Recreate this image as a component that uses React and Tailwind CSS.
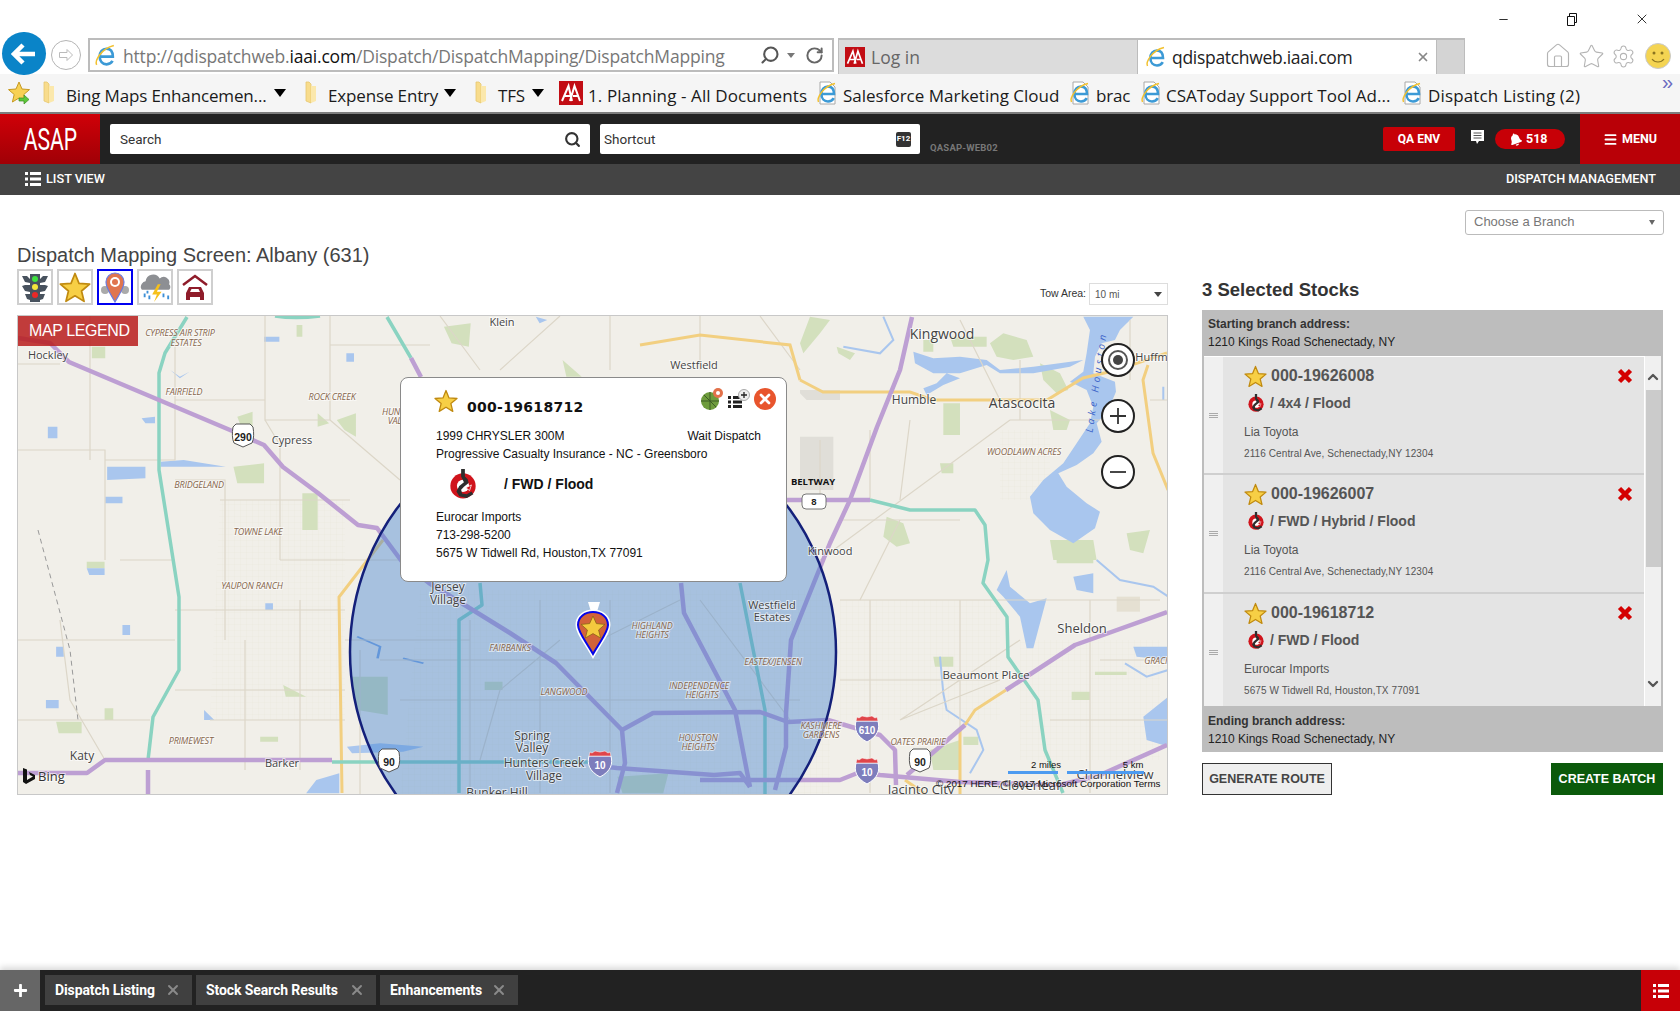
import { Search, RotateCw, Home, Star as StarLine, Settings, X, Minus, Menu, ChevronUp, ChevronDown } from "lucide-react";
import { FaBell, FaPlus } from "react-icons/fa";

const segoe = "font-['Open_Sans',sans-serif]";

const StarIcon = ({ size = 22, className = "" }) => (
  <svg width={size} height={size} viewBox="0 0 24 24" className={className} aria-hidden="true">
    <path d="M12 1.500l3 7.400 8 .6-6.100 5.100 1.900 7.800L12 18.200l-6.800 4.200 1.900-7.800L1 9.500l8-.6z" fill="#f7cf45" stroke="#c08a10" strokeWidth="1.300" strokeLinejoin="round" />
  </svg>
);

const HookIcon = ({ size = 16 }) => (
  <svg width={size} height={size + 2} viewBox="0 0 28 32" className="shrink-0" aria-hidden="true">
    <circle cx="14" cy="18" r="13.500" fill="#d0141c" />
    <circle cx="14" cy="18" r="6.500" fill="#fff" />
    <path d="M12 0h4v8l3 3 1 4-5 4-3 3 1 4 5 1 5-3 2 3-7 4-8-2-3-5 3-6 5-4-2-4-1-2z" fill="#2e2e2e" />
    <path d="M17 20l6-3-2 6z" fill="#d0141c" stroke="#fff" strokeWidth="0.800" />
  </svg>
);

const IeIcon = ({ size = 22, page = false }) => (
  <svg width={size} height={size} viewBox="0 0 24 24" className="shrink-0" aria-hidden="true">
    {page && <path d="M5 1h10l5 5v17H5z" fill="#fff" stroke="#a8a8a8" />}
    <path d="M7 13h12c0-5-2.600-7.500-6.200-7.500S6.400 8.500 6.400 13s2.800 7.500 6.600 7.500c2.600 0 4.600-1.200 5.800-3.300" fill="none" stroke="#3c9ad6" strokeWidth="2.600" />
    <path d="M3.500 21C1.500 17 8 5.500 20 2.500" fill="none" stroke="#f2c12e" strokeWidth="1.500" />
  </svg>
);

const IaaLogo = ({ size = 24 }) => (
  <svg width={size} height={size} viewBox="0 0 24 24" className="shrink-0" aria-hidden="true">
    <rect width="24" height="24" fill="#c20d14" />
    <path d="M3 20L9.500 5 13 20M11 20L15.500 5 21 20M6 15h5M14 15h5" fill="none" stroke="#fff" strokeWidth="2" />
  </svg>
);

const Folder = () => (
  <svg width="14" height="24" viewBox="0 0 14 24" className="shrink-0" aria-hidden="true">
    <path d="M2 1h3l2 2v19l-5-2z" fill="#f8dc8c" stroke="#e6c670" strokeWidth="0.800" />
    <path d="M7 5h5v15l-5 2z" fill="#fbe8ac" />
  </svg>
);

const Caret = () => <span className="w-0 h-0 border-x-[6px] border-x-transparent border-t-[8px] border-t-black shrink-0" />;

const FavText = ({ w, track = "tracking-[-0.15px]", children }) => (
  <span className={`${segoe} text-[17px] ${track} text-[#1a1a1a] whitespace-nowrap shrink-0 leading-[24px] pt-[5px]`} style={{ width: w }}>
    {children}
  </span>
);

const BrowserChrome = () => (
  <div className="shrink-0">
    <div className="h-[38px] flex justify-end items-center pr-[30px] gap-[56px] text-black">
      <Minus className="w-[13px] h-[13px]" strokeWidth={1.500} />
      <svg width="12" height="13" viewBox="0 0 12 13" aria-hidden="true"><path d="M1.500 3.500h7v9h-7zM3.500 3.500V.500h7v9h-2" fill="none" stroke="#111" /></svg>
      <X className="w-[16px] h-[16px]" strokeWidth={1.200} />
    </div>

    <div className="h-[36px] flex items-start relative">
      <div className="w-[44px] h-[43px] ml-[2px] -mt-[6px] rounded-full bg-[#0a84c8] flex items-center justify-center shrink-0 z-10">
        <svg width="26" height="24" viewBox="0 0 26 24" aria-hidden="true"><path d="M12 3L3 12l9 9M4 12h20" fill="none" stroke="#fff" strokeWidth="4.500" /></svg>
      </div>
      <div className="w-[30px] h-[30px] ml-[5px] mt-[2px] rounded-full border border-[#b5b5b5] flex items-center justify-center shrink-0">
        <svg width="16" height="14" viewBox="0 0 16 14" aria-hidden="true"><path d="M9 1.500L14.500 7 9 12.500V9.500H1.500v-5H9z" fill="#fff" stroke="#bbb" /></svg>
      </div>
      <div className="w-[746px] h-[34px] ml-[7px] border-2 border-[#bcbcbc] flex items-center pl-[3px] bg-white shrink-0">
        <IeIcon size={25} />
        <span className={`${segoe} ml-[5px] pt-[2px] w-[604px] text-[17.500px] tracking-[-0.18px] text-[#777] whitespace-nowrap`}>
          http://qdispatchweb.<span className="text-[#111]">iaai.com</span>/Dispatch/DispatchMapping/DispatchMapping
        </span>
        <Search className="w-[20px] h-[20px] text-[#555] -scale-x-100 ml-[33px]" strokeWidth={2.500} />
        <span className="w-0 h-0 ml-[7px] border-x-[4px] border-x-transparent border-t-[5px] border-t-[#777]" />
        <RotateCw className="w-[19px] h-[19px] text-[#666] ml-[10px]" strokeWidth={2.500} />
      </div>
      <div className="ml-[4px] flex h-[36px] border-t-2 border-[#bcbcbc] shrink-0">
        <div className="w-[299px] bg-[#dcdcdc] border-l border-[#bcbcbc] flex items-center pl-[6px] gap-[6px]">
          <IaaLogo size={20} />
          <span className={`${segoe} pt-[1px] text-[17.500px] text-[#666]`}>Log in</span>
        </div>
        <div className="w-[300px] bg-white border-x border-[#bcbcbc] flex items-center pl-[6px] gap-[4px]">
          <IeIcon size={24} />
          <span className={`${segoe} pt-[1px] text-[17.500px] tracking-[-0.3px] text-[#222]`}>qdispatchweb.iaai.com</span>
          <X className="w-[14px] h-[14px] text-[#888] ml-auto mr-[6px]" strokeWidth={3} />
        </div>
        <div className="w-[28px] bg-[#d4d4d4] border-r border-[#bcbcbc]" />
      </div>
      <div className="ml-[79px] flex items-center h-[36px] text-[#b4b4b4] shrink-0">
        <Home className="w-[28px] h-[28px]" strokeWidth={1} />
        <StarLine className="w-[27px] h-[27px] ml-[6px]" strokeWidth={1} />
        <Settings className="w-[25px] h-[25px] ml-[6px]" strokeWidth={1} />
        <svg width="26" height="26" viewBox="0 0 26 26" className="ml-[9px]" aria-hidden="true">
          <circle cx="13" cy="13" r="12.500" fill="#f4d452" stroke="#c9c9c9" />
          <circle cx="9" cy="10" r="1.500" fill="#8a7420" />
          <circle cx="17" cy="10" r="1.500" fill="#8a7420" />
          <path d="M7 16c3 4 9 4 12 0" fill="none" stroke="#8a7420" strokeWidth="1.200" />
        </svg>
      </div>
    </div>

    <div className="h-[40px] bg-[#f5f5f5] border-b-2 border-[#7d7d7d] flex items-center pl-[7px] relative">
      <svg width="24" height="26" viewBox="0 0 24 26" className="shrink-0" aria-hidden="true">
        <path d="M12 2l3 7 7.500.6-5.700 4.900 1.800 7.500L12 18l-6.600 4 1.800-7.500L1.500 9.600 9 9z" fill="#f7d154" stroke="#c79a22" />
        <path d="M12 18h5v-3l5 4.500-5 4.500v-3h-5z" fill="#5cc83a" stroke="#3c8c24" strokeWidth="0.700" />
      </svg>
      <span className="w-[11px] shrink-0" /><Folder /><span className="w-[10px] shrink-0" />
      <FavText w={201}>Bing Maps Enhancemen...</FavText>
      <span className="w-[7px] shrink-0" /><Caret /><span className="w-[18px] shrink-0" /><Folder /><span className="w-[10px] shrink-0" />
      <FavText w={109}>Expense Entry</FavText>
      <span className="w-[7px] shrink-0" /><Caret /><span className="w-[18px] shrink-0" /><Folder /><span className="w-[10px] shrink-0" />
      <FavText w={28}>TFS</FavText>
      <span className="w-[6px] shrink-0" /><Caret /><span className="w-[15px] shrink-0" /><IaaLogo size={24} /><span className="w-[5px] shrink-0" />
      <FavText w={218} track="tracking-[0.1px]">1. Planning - All Documents</FavText>
      <span className="w-[9px] shrink-0" /><IeIcon size={24} page /><span className="w-[4px] shrink-0" />
      <FavText w={216} track="tracking-[0px]">Salesforce Marketing Cloud</FavText>
      <span className="w-[9px] shrink-0" /><IeIcon size={24} page /><span className="w-[4px] shrink-0" />
      <FavText w={35}>brac</FavText>
      <span className="w-[8px] shrink-0" /><IeIcon size={24} page /><span className="w-[3px] shrink-0" />
      <FavText w={226} track="tracking-[0px]">CSAToday Support Tool Ad...</FavText>
      <span className="w-[8px] shrink-0" /><IeIcon size={24} page /><span className="w-[4px] shrink-0" />
      <FavText w={152} track="tracking-[0.15px]">Dispatch Listing (2)</FavText>
      <span className="absolute right-[7px] top-[-4px] text-[#6a6ac0] text-[20px] leading-[24px] font-['Liberation_Sans',sans-serif]">»</span>
    </div>
  </div>
);

const AppHeader = () => (
  <div className="shrink-0 font-['Roboto',sans-serif]">
    <div className="h-[50px] bg-[#222] flex items-center">
      <div className="w-[100px] h-full bg-gradient-to-b from-[#d00008] to-[#a00006] flex items-center justify-center shrink-0">
        <span className="text-white text-[32px] leading-none scale-x-[0.66]">ASAP</span>
      </div>
      <div className="ml-[10px] w-[480px] h-[30px] bg-white rounded-[2px] flex items-center pl-[10px] pr-[9px] justify-between">
        <span className="text-[13.500px] text-[#333]">Search</span>
        <Search className="w-[17px] h-[17px] text-[#333]" strokeWidth={3} />
      </div>
      <div className="ml-[10px] w-[320px] h-[30px] bg-white rounded-[2px] flex items-center pl-[4px] pr-[9px] justify-between">
        <span className="text-[13.500px] text-[#333]">Shortcut</span>
        <span className="w-[15px] h-[15px] bg-[#333] rounded-[2px] text-white text-[8px] font-bold flex items-center justify-center">F12</span>
      </div>
      <span className="ml-[10px] mt-[18px] text-[9.500px] font-bold text-[#777] tracking-[0.2px]">QASAP-WEB02</span>
      <div className="ml-auto w-[72px] h-[24px] bg-[#c70007] rounded-[2px] flex items-center justify-center text-white text-[12px] font-bold">QA ENV</div>
      <svg width="15" height="17" viewBox="0 0 15 17" className="ml-[15px] -mt-[4px]" aria-hidden="true">
        <path d="M1 1h13v11H9l-2 3-1-3H1z" fill="#fff" />
        <path d="M3.500 4h8M3.500 6.500h8M3.500 9h8" stroke="#555" />
      </svg>
      <div className="ml-[10px] w-[70px] h-[20px] bg-[#c70007] rounded-full flex items-center pl-[14px] gap-[4px] text-white text-[12.500px] font-bold">
        <FaBell className="w-[13px] h-[13px] -rotate-[20deg]" />518
      </div>
      <div className="ml-[15px] w-[100px] h-full bg-[#b90007] flex items-center justify-center gap-[4px] text-white text-[12.500px] font-bold">
        <Menu className="w-[15px] h-[15px]" strokeWidth={3} />MENU
      </div>
    </div>
    <div className="h-[31px] bg-[#444] flex items-center justify-between pl-[25px] pr-[24px] pb-[1px] text-white text-[12.700px] font-medium">
      <div className="flex items-center gap-[5px]">
        <svg width="16" height="14" viewBox="0 0 16 14" aria-hidden="true"><path d="M0 0h3v3H0zM0 5.500h3v3H0zM0 11h3v3H0zM5 0h11v3H5zM5 5.500h11v3H5zM5 11h11v3H5z" fill="#fff" /></svg>
        LIST VIEW
      </div>
      <span>DISPATCH MANAGEMENT</span>
    </div>
  </div>
);

const thinRoads = [
  "M18 364H60M90 316V460M18 450H105V560M105 460H175V330M175 400H265V316M265 316V420H330V316",
  "M265 420L280 445M330 345H430M330 420L400 480M280 445V560M220 500H350M280 560H400M175 480H225V640",
  "M120 560H175M18 640H175M175 610H345M245 640V770M300 600V770M360 650V795M175 690H345M18 720H150M210 720H345",
  "M60 620L70 700L105 760M345 640H470M470 620V793M400 700H800M540 600V793M610 600V793",
  "M480 760L500 690L560 640M380 660H600M600 640L680 600M700 600L790 720M820 560L1010 420M1010 420H1100M1020 360V420",
  "M840 600H1160M870 600V793M960 600V793M1020 640L900 720M1090 600V793M1100 660H1168M840 680H1000M1050 720H1168M900 720L1000 680",
  "M440 316L480 370M560 316L500 370M610 316V370M700 316V370M760 316L800 370M820 440V500M870 430V500",
  "M960 320L1000 400M840 520H960M900 520L860 600M910 420L900 500M1130 320V380M1150 400H1168",
];

const places = [
  ["Klein", 502, 323, 11], ["Kingwood", 942, 335, 14], ["Westfield", 694, 366, 11], ["Humble", 914, 401, 12],
  ["Atascocita", 1022, 404, 14], ["Hockley", 48, 356, 11], ["Cypress", 292, 441, 11], ["Kinwood", 830, 552, 11],
  ["Jersey", 448, 588, 12], ["Village", 448, 601, 12], ["Westfield", 772, 606, 11], ["Estates", 772, 618, 11],
  ["Sheldon", 1082, 630, 13], ["Beaumont Place", 986, 676, 11.500], ["Spring", 532, 737, 12], ["Valley", 532, 749, 12],
  ["Hunters Creek", 544, 764, 12], ["Village", 544, 777, 12], ["Bunker Hill", 497, 794, 12], ["Katy", 82, 757, 12],
  ["Barker", 282, 764, 11], ["Huffman", 1158, 358, 11], ["Jacinto City", 921, 791, 13], ["Cloverleaf", 1030, 787, 13], ["Channelview", 1115, 776, 13],
];

const areas = [
  ["CYPRESS AIR STRIP", 180, 334], ["ESTATES", 186, 344], ["FAIRFIELD", 184, 393], ["ROCK CREEK", 332, 398],
  ["HUNTERS", 400, 413], ["VALLEY", 401, 422], ["BRIDGELAND", 199, 486], ["TOWNE LAKE", 258, 533], ["YAUPON RANCH", 252, 587],
  ["PRIMEWEST", 191, 742], ["FAIRBANKS", 510, 649], ["HIGHLAND", 652, 627], ["HEIGHTS", 652, 636], ["EASTEX/JENSEN", 773, 663],
  ["INDEPENDENCE", 699, 687], ["HEIGHTS", 702, 696], ["LANGWOOD", 564, 693], ["HOUSTON", 698, 739], ["HEIGHTS", 698, 748],
  ["KASHMERE", 821, 727], ["GARDENS", 821, 736], ["OATES PRAIRIE", 918, 743], ["GRACIE", 1158, 662], ["WOODLAWN ACRES", 1024, 453],
];

const UsShield = ({ x, y, n }) => (
  <g>
    <path d={`M${x - 10} ${y - 10}l3-3h14l3 3c1 6 1 12-1 16l-9 4-9-4c-2-4-2-10-1-16z`} fill="#fff" stroke="#555" />
    <text x={x} y={y + 1} textAnchor="middle" dominantBaseline="middle" className="font-['Liberation_Sans',sans-serif] font-bold text-[10.500px] fill-[#222]">{n}</text>
  </g>
);

const IShield = ({ x, y, n }) => (
  <g>
    <path d={`M${x - 11} ${y - 9}h22c2 8 0 15-11 21-11-6-13-13-11-21z`} fill="#7d7dbc" stroke="#fff" />
    <path d={`M${x - 11} ${y - 9}l1-4 2 1 3-2 5 1 5-1 3 2 2-1 1 4z`} fill="#e0454a" stroke="#fff" strokeWidth="0.500" />
    <text x={x} y={y + 1} textAnchor="middle" dominantBaseline="middle" className="font-['Liberation_Sans',sans-serif] font-bold text-[10px] fill-white">{n}</text>
  </g>
);

const parkColor = "#d3e0bd";
const waterColor = "#a9c6ee";

// Parks and water, traced in the coordinates of crops of each map corner
const NorthEast = () => (
  <g transform="translate(800 310) scale(0.3333)">
    <path d="M570 100L610 70L680 90L700 140L640 150L590 140ZM720 160L780 190L805 240L770 250L730 210ZM430 280H480V375H430ZM260 620L310 640L330 700L290 710L250 680ZM750 300L810 330L800 360L760 360ZM420 460H460V490H425ZM980 670L1050 660L1030 730L990 720ZM750 690L880 690L890 750H760ZM30 20L90 30L60 70L10 130L0 100ZM110 110L165 130L150 150L115 130ZM370 90H400V125H370ZM450 80H560V110H460Z" fill={parkColor} />
    <path d="M850 20H1000L960 60L945 90L905 100L885 140L880 190L945 215L948 245L925 300L890 340L905 395L880 430L830 465L775 490L800 530L860 580L900 605L885 655L820 700L750 660L700 610L690 560L730 510L790 460L830 400L870 340L880 290L860 240L810 215L850 185L860 130L870 60Z" fill={waterColor} />
    <path d="M850 150L700 170L600 180L560 150L480 140L400 145L340 125L345 160L400 190L480 190L560 165L600 190L700 190L810 170ZM440 190L480 205L430 225L380 255L370 235L410 220Z" fill={waterColor} />
    <path d="M250 20L280 90L240 130L130 110M1090 230V270" fill="none" stroke={waterColor} strokeWidth="6" />
    <path d="M0 240H120V270H20L0 250ZM0 380H100V540H0Z" fill="#e0ded8" />
  </g>
);

const SouthEast = () => (
  <g transform="translate(800 560) scale(0.3333)">
    <path d="M400 290H460V320H405ZM815 395H870V420H815ZM885 335H980V345H885ZM390 570L480 540V630H400ZM490 530H535V555H490ZM770 0H880V10H770Z" fill={parkColor} />
    <path d="M590 90L620 30L630 80L690 130L740 115L700 265L680 265L660 170L610 110ZM820 50L880 40L880 100L830 90ZM1000 260H1105V300L1010 290ZM1105 410L1030 470L1040 540L1105 560Z" fill={waterColor} />
    <path d="M420 290L430 400L440 450L530 510L550 570L510 640M890 0L960 60L1060 80L1105 110M975 310L1040 350L1105 330" fill="none" stroke={waterColor} strokeWidth="6" />
    <path d="M950 110H1020V155H950Z" fill="#e5e0d2" />
  </g>
);

const NorthWest = () => (
  <g transform="translate(0 230) scale(0.3827 0.3333)">
    <path d="M1160 290L1230 280L1225 350L1180 340ZM775 285H790V320H775ZM240 350H275V385H240ZM610 710L690 700V760H620ZM620 560L660 545V590H630ZM830 550L860 580L830 590ZM880 570L930 550V620L900 600ZM1470 390L1520 440L1480 440ZM790 790H830V900H790Z" fill={parkColor} />
    <path d="M280 710L380 710V745L280 750ZM420 695L480 690L590 710L480 710L420 710ZM275 800H320V820H275ZM125 590L150 590V625H125ZM370 565L405 560V580H380ZM445 420L470 440L495 425L470 445ZM905 370H925V395H905ZM690 320H730V335H690ZM1400 260L1430 270L1410 280Z" fill={waterColor} />
  </g>
);

const SouthWest = () => (
  <g transform="translate(0 530) scale(0.5102 0.3333)">
    <path d="M170 95H205V115H170ZM110 575H160V610H115ZM205 535H222V570H205ZM510 620H545V635H510ZM555 465L600 500L560 500ZM690 440H760V555L700 540ZM950 455H985V480H950ZM1210 740L1310 730L1300 790H1220Z" fill={parkColor} />
    <path d="M240 285H255V315H240ZM110 350H125V380H110ZM90 510L115 510V535H90ZM170 115H205V135H175ZM600 790L620 750L665 730V790ZM680 650L745 640L830 650L790 665L690 670ZM400 540L420 570L400 570ZM520 220H535V240H520Z" fill={waterColor} />
    <path d="M700 320L745 350L740 385M790 385L830 400" fill="none" stroke="#7fa8e2" strokeWidth="5" />
  </g>
);

const MapDrawing = () => (
  <svg viewBox="18 316 1149 478" className="block w-full h-full" aria-hidden="true">
    <defs>
      <pattern id="urban" width="6" height="6" patternUnits="userSpaceOnUse">
        <path d="M0 0H6M0 0V6" stroke="#dfdacd" strokeWidth="0.500" />
      </pattern>
    </defs>
    <rect x="18" y="316" width="1149" height="478" fill="#f1efe9" />
    <path d="M220 500H345V720H210ZM420 590H830V794H400ZM840 600H1000V720H840ZM1000 430H1050V500H1000ZM1020 640H1160V760H1020Z" fill="url(#urban)" opacity="0.500" />
    <NorthWest />
    <SouthWest />
    <NorthEast />
    <SouthEast />
    {thinRoads.map((d, i) => <path key={i} d={d} fill="none" stroke="#dcd6c8" strokeWidth="1.200" />)}
    <path d="M38 530L70 650L78 720" fill="none" stroke="#999" strokeWidth="1" strokeDasharray="5 4" />

    <g fill="none" stroke="#f2cf80" strokeWidth="3">
      <path d="M800 380L823 392H910L933 400H1047L1083 378L1117 370L1167 353M1148 365L1143 380L1153 453L1168 490" />
      <path d="M383 540L339 597L342 793M640 345L700 335L790 345L800 380" />
      <path d="M965 725L975 710L1006 690M960 730V794M905 780L925 794" />
    </g>
    <g fill="none" stroke="#8ad3c1" strokeWidth="3.500" strokeLinejoin="round">
      <path d="M187 317L165 353L159 373V470L168 527L179 597V670L153 717L148 760" />
      <path d="M387 317L411 358M332 762H590" />
      <path d="M870 500L910 510H975L985 525L988 560L983 583L1007 617L1008 657L1038 700L1045 750L1063 793" />
      <path d="M480 583L482 605L459 620V793M740 583L765 710V794M275 316Q295 319 320 316" />
    </g>
    <g fill="none" stroke="#bd9fd3" strokeWidth="4.500" strokeLinejoin="round">
      <path d="M18 338L50 343L69 362L159 400L230 430L264 445L283 467L318 493L358 525L377 528L403 563L429 583L510 633L556 663L622 730L625 763L617 793" />
      <path d="M18 773H87L105 760H332M148 770V794M590 765L617 768L714 775L740 773L750 787" />
      <path d="M622 730L653 713L760 712L788 722L828 720L855 728L880 735L895 750L896 785" />
      <path d="M700 780H840L860 772L880 775L960 782L1060 785L1100 775L1167 745" />
      <path d="M907 775L965 725M1006 690L1075 645L1167 612" />
      <path d="M912 317L900 370L877 427L850 500L830 543L807 600L791 640L786 713V747L775 790" />
      <path d="M787 500H870M411 358L421 377" />
      <path d="M681 583L684 613L735 710L750 787" />
    </g>

    <circle cx="593" cy="652" r="243" fill="#3a7ccf" fillOpacity="0.400" stroke="#14207a" strokeWidth="2.500" />

    {places.map(([t, x, y, s], i) => (
      <text key={i} x={x} y={y} textAnchor="middle" dominantBaseline="middle" style={{ fontSize: s }} className="font-['Open_Sans',sans-serif] fill-[#444] stroke-white/60 stroke-[2px] [paint-order:stroke]">{t}</text>
    ))}
    {areas.map(([t, x, y], i) => (
      <text key={i} x={x} y={y} textAnchor="middle" dominantBaseline="middle" className="font-['Open_Sans',sans-serif] italic text-[9px] tracking-[-0.2px] fill-[#86664c] stroke-white/50 stroke-[2px] [paint-order:stroke]">{t}</text>
    ))}
    <text x="813" y="482" textAnchor="middle" dominantBaseline="middle" className="font-['Open_Sans',sans-serif] font-bold text-[9.500px] fill-[#111]">BELTWAY</text>
    <text x="1097" y="382" textAnchor="middle" dominantBaseline="middle" transform="rotate(-82 1097 382)" className="font-['Open_Sans',sans-serif] italic text-[10px] tracking-[3.500px] fill-[#3a62c8]">Lake Houston</text>

    <UsShield x={243} y={437} n="290" />
    <UsShield x={389} y={762} n="90" />
    <UsShield x={920} y={762} n="90" />
    <IShield x={600} y={765} n="10" />
    <IShield x={867} y={730} n="610" />
    <IShield x={867} y={772} n="10" />
    <rect x="802" y="494" width="24" height="15" rx="4" fill="#fff" stroke="#777" />
    <text x="814" y="502" textAnchor="middle" dominantBaseline="middle" className="font-['Liberation_Sans',sans-serif] font-bold text-[9.500px] fill-[#222]">8</text>

    <path d="M588 602H600L594 621Z" fill="#fff" />
    <path d="M593 654C585 640 578 632 578 625C578 617 585 612 593 612C601 612 608 617 608 625C608 632 601 640 593 654Z" fill="#d2623a" stroke="#fff" strokeWidth="5" />
    <path d="M593 654C585 640 578 632 578 625C578 617 585 612 593 612C601 612 608 617 608 625C608 632 601 640 593 654Z" fill="#d2623a" stroke="#0505e8" strokeWidth="2" />
    <path d="M593 616l3.400 7.600 8.600.8-6.400 5.600 2 8-7.600-4.400-7.600 4.400 2-8-6.400-5.600 8.600-.8z" fill="#f4c93e" stroke="#8a6414" strokeWidth="0.800" />

    <path d="M23 768l4 1.500V780l6-3.500-3-1.500-1-3 6 3v4l-9 5-3-2z" fill="#111" />
    <text x="38" y="778" dominantBaseline="middle" className="font-['Open_Sans',sans-serif] text-[13px] fill-[#333] stroke-white/60 stroke-[2px] [paint-order:stroke]">Bing</text>
    <text x="1046" y="765" textAnchor="middle" dominantBaseline="middle" className="font-['Liberation_Sans',sans-serif] text-[9.500px] fill-[#111]">2 miles</text>
    <text x="1133" y="765" textAnchor="middle" dominantBaseline="middle" className="font-['Liberation_Sans',sans-serif] text-[9.500px] fill-[#111]">5 km</text>
    <rect x="1008" y="771" width="50" height="3" fill="#4d9bf0" />
    <rect x="1067" y="771" width="77" height="3" fill="#4d9bf0" />
    <text x="936" y="784" dominantBaseline="middle" className="font-['Liberation_Sans',sans-serif] text-[9.800px] fill-[#111]">© 2017 HERE, © 2017 Microsoft Corporation  Terms</text>
  </svg>
);

const RoundBtn = ({ children }) => (
  <button type="button" className="w-[34px] h-[34px] rounded-full bg-white border-2 border-[#222] flex items-center justify-center">
    {children}
  </button>
);

const Popup = () => (
  <div className="absolute left-[382px] top-[61px] w-[387px] h-[205px] bg-white rounded-[8px] border border-[#8a8a8a] pl-[35px] text-[12px] text-[#111]">
    <div className="h-[49px] flex items-start pt-[11px] -ml-[2px]">
      <StarIcon size={24} />
      <span className="ml-[9px] mt-[10px] font-['DejaVu_Sans',sans-serif] font-bold text-[14px] leading-[16px] tracking-[0.3px]">000-19618712</span>
    </div>
    <div className="h-[18px] leading-[18px] flex justify-between pr-[25px]">
      <span>1999 CHRYSLER 300M</span>
      <span>Wait Dispatch</span>
    </div>
    <div className="h-[18px] leading-[18px]">Progressive Casualty Insurance - NC - Greensboro</div>
    <div className="h-[42px] flex items-center">
      <span className="ml-[13px]"><HookIcon size={28} /></span>
      <span className="ml-[27px] font-bold text-[14px]">/ FWD / Flood</span>
    </div>
    <div className="mt-[3px] leading-[18px]">
      <div>Eurocar Imports</div>
      <div>713-298-5200</div>
      <div>5675 W Tidwell Rd, Houston,TX 77091</div>
    </div>
    <div className="absolute right-[10px] top-[9px] flex items-center gap-[4px]">
      <svg width="24" height="24" viewBox="0 0 24 24" aria-hidden="true">
        <circle cx="10" cy="14" r="9" fill="#6e9c3c" />
        <path d="M1 14h18M10 5v18M4 8l12 12" stroke="#3c5c24" strokeWidth="1" />
        <circle cx="18" cy="6" r="5" fill="#e2714a" />
        <circle cx="18" cy="6" r="2" fill="#fff" />
      </svg>
      <svg width="22" height="20" viewBox="0 0 22 20" aria-hidden="true">
        <path d="M0 7h3v3H0zM0 11.500h3v3H0zM0 16h3v3H0zM5 7h9v3H5zM5 11.500h9v3H5zM5 16h9v3H5z" fill="#222" />
        <circle cx="16" cy="6" r="5.500" fill="#eee" stroke="#aaa" />
        <path d="M13 6h6M16 3v6" stroke="#222" strokeWidth="1.300" />
      </svg>
      <span className="w-[22px] h-[22px] rounded-full bg-[#e8552d] flex items-center justify-center">
        <X className="w-[16px] h-[16px] text-white" strokeWidth={4} />
      </span>
    </div>
  </div>
);

const MapPanel = () => (
  <div className="relative mt-[10px] h-[480px] border border-[#c8c8c8] overflow-hidden">
    <MapDrawing />
    <div className="absolute left-0 top-0 w-[120px] h-[30px] bg-[#b91c1c]/85 text-white text-[16px] tracking-[-0.4px] flex items-center pl-[11px]">MAP LEGEND</div>
    <div className="absolute left-[1083px] top-[27px] flex flex-col gap-[22px]">
      <RoundBtn>
        <span className="w-[20px] h-[20px] rounded-full border-2 border-[#555] flex items-center justify-center">
          <span className="w-[10px] h-[10px] rounded-full bg-[#444]" />
        </span>
      </RoundBtn>
      <RoundBtn>
        <svg width="18" height="18" viewBox="0 0 18 18" aria-hidden="true"><path d="M9 1v16M1 9h16" stroke="#333" strokeWidth="1.800" /></svg>
      </RoundBtn>
      <RoundBtn>
        <svg width="18" height="18" viewBox="0 0 18 18" aria-hidden="true"><path d="M1 9h16" stroke="#333" strokeWidth="1.800" /></svg>
      </RoundBtn>
    </div>
    <Popup />
  </div>
);

const ToolBtn = ({ active, children }) => (
  <button type="button" className={`w-[36px] h-[36px] border-2 flex items-center justify-center bg-white ${active ? "border-[#0000f0]" : "border-[#cfcfcf]"}`}>
    {children}
  </button>
);

const MapTools = () => (
  <div className="h-[36px] flex items-end justify-between">
    <div className="flex gap-[4px] self-start">
      <ToolBtn>
        <svg width="26" height="30" viewBox="0 0 26 30" aria-hidden="true">
          <path d="M0 4h5l3 3v-5h10v5l3-3h5l-3 6-5 1v2h5l3 1-3 5-5 1v2h5l-2 5-3 1v2H8v-2l-3-1-2-5h5v-2l-5-1-3-5 3-1h5v-2l-5-1z" fill="#48525e" />
          <circle cx="13" cy="7" r="3" fill="#3fe03f" />
          <circle cx="13" cy="15" r="3" fill="#f4e53c" />
          <circle cx="13" cy="23" r="3" fill="#e92828" />
        </svg>
      </ToolBtn>
      <ToolBtn><StarIcon size={33} /></ToolBtn>
      <ToolBtn active>
        <svg width="30" height="32" viewBox="0 0 30 32" aria-hidden="true">
          <circle cx="5" cy="19" r="4" fill="#aaa" />
          <circle cx="25" cy="19" r="4" fill="#aaa" />
          <path d="M15 31C10 22 6 17 6 11a9 9 0 0 1 18 0c0 6-4 11-9 20z" fill="#e0754f" stroke="#6a7ce0" strokeWidth="1.200" />
          <circle cx="15" cy="11" r="5" fill="#fff" />
          <circle cx="15" cy="11" r="3" fill="#e0754f" />
        </svg>
      </ToolBtn>
      <ToolBtn>
        <svg width="34" height="34" viewBox="0 0 34 34" aria-hidden="true">
          <path d="M2 18a6 6 0 0 1 5-7 8 8 0 0 1 15-3 6 6 0 0 1 10 6 4 4 0 0 1 0 6H3z" fill="#8d8f93" />
          <path d="M20 14l-6 11h5l-3 8 8-11h-5l4-8z" fill="#f6c01a" />
          <path d="M6 24v4M11 26v4M26 24v4M31 26v4M9 21v3" stroke="#3d8fd6" strokeWidth="2" />
        </svg>
      </ToolBtn>
      <ToolBtn>
        <svg width="28" height="30" viewBox="0 0 28 30" aria-hidden="true">
          <path d="M2 13L14 4l12 9" fill="none" stroke="#8f1c2a" strokeWidth="2.500" />
          <path d="M5 28v-7l3-6h12l3 6v7h-4v-3H9v3z" fill="#8f1c2a" />
          <path d="M9 20l1.500-3h7l1.500 3z" fill="#fff" />
        </svg>
      </ToolBtn>
    </div>
    <div className="flex items-center gap-[3px]">
      <span className="text-[10.500px] text-[#333]">Tow Area:</span>
      <div className="w-[79px] h-[22px] border border-[#ddd] flex items-center justify-between px-[5px] text-[10px] text-[#555]">
        10 mi
        <span className="w-0 h-0 border-x-[4px] border-x-transparent border-t-[5px] border-t-[#444]" />
      </div>
    </div>
  </div>
);

const RedX = () => (
  <svg width="16" height="16" viewBox="0 0 16 16" className="ml-auto mr-[11px]" aria-hidden="true">
    <path d="M2.500 2.500l11 11M13.500 2.500l-11 11" stroke="#d40000" strokeWidth="4.500" />
  </svg>
);

const StockItem = ({ num, desc, name, addr, h }) => (
  <div className={`flex shrink-0 bg-[#e4e4e4] border-b-2 border-[#cfcfcf] ${h}`}>
    <div className="w-[19px] bg-[#f0f0f0] flex items-center justify-center shrink-0">
      <span className="w-[9px] h-[5px] border-y border-[#aaa] relative after:absolute after:left-0 after:right-0 after:top-[1px] after:h-px after:bg-[#aaa]" />
    </div>
    <div className="flex-1 pl-[21px] pt-[8px] text-[#555]">
      <div className="h-[22px] flex items-center">
        <StarIcon size={23} />
        <span className="ml-[4px] font-bold text-[16px]">{num}</span>
        <RedX />
      </div>
      <div className="mt-[6px] h-[20px] flex items-center pl-[4px]">
        <HookIcon size={16} />
        <span className="ml-[6px] font-bold text-[14px]">{desc}</span>
      </div>
      <div className="mt-[10px] h-[18px] leading-[18px] text-[12px]">{name}</div>
      <div className="mt-[6px] h-[14px] leading-[14px] text-[10px] tracking-[0.1px]">{addr}</div>
    </div>
  </div>
);

const BranchAddress = ({ label, pad }) => (
  <div className={`h-[46px] bg-[#bdbdbd] pl-[6px] text-[12px] leading-[18px] text-[#222] shrink-0 ${pad}`}>
    <div className="font-bold text-[#333]">{label}</div>
    <div>1210 Kings Road Schenectady, NY</div>
  </div>
);

const StocksPanel = () => (
  <div className="w-[461px] shrink-0 pt-[45px]">
    <h2 className="h-[30px] text-[18.500px] font-bold text-[#333] leading-[20px]">3 Selected Stocks</h2>
    <BranchAddress label="Starting branch address:" pad="pt-[5px]" />
    <div className="h-[350px] border-x-2 border-[#bdbdbd] flex overflow-hidden">
      <div className="w-[440px] shrink-0 flex flex-col pt-px">
        <StockItem h="h-[118px]" num="000-19626008" desc="/ 4x4 / Flood" name="Lia Toyota" addr="2116 Central Ave, Schenectady,NY 12304" />
        <StockItem h="h-[119px]" num="000-19626007" desc="/ FWD / Hybrid / Flood" name="Lia Toyota" addr="2116 Central Ave, Schenectady,NY 12304" />
        <StockItem h="h-[119px]" num="000-19618712" desc="/ FWD / Flood" name="Eurocar Imports" addr="5675 W Tidwell Rd, Houston,TX 77091" />
      </div>
      <div className="flex-1 ml-px bg-[#f0f0f0] flex flex-col items-center relative">
        <ChevronUp className="w-[16px] h-[16px] mt-[13px] text-[#555]" strokeWidth={3.500} />
        <div className="w-[15px] h-[177px] mt-[5px] bg-[#cbcbcb]" />
        <ChevronDown className="absolute left-0 bottom-[14px] w-[16px] h-[16px] text-[#555]" strokeWidth={3.500} />
      </div>
    </div>
    <BranchAddress label="Ending branch address:" pad="pt-[6px]" />
    <div className="mt-[11px] flex justify-between">
      <button type="button" className="w-[130px] h-[32px] bg-[#eee] border border-[#333] text-[12.500px] font-bold text-[#444]">GENERATE ROUTE</button>
      <button type="button" className="w-[112px] h-[32px] bg-[#0b5a0b] text-[12.500px] font-bold text-white">CREATE BATCH</button>
    </div>
  </div>
);

const DockTab = ({ w, children }) => (
  <div className={`h-[30px] bg-[#404040] flex items-center justify-between pl-[10px] pr-[11px] text-white text-[14px] font-bold tracking-[-0.1px] ${w}`}>
    {children}
    <X className="w-[16px] h-[16px] text-[#8a8a8a]" strokeWidth={2.800} />
  </div>
);

const BottomBar = () => (
  <div className="h-[41px] bg-[#222] flex items-start shrink-0 font-['Roboto',sans-serif] shadow-[0_-3px_6px_rgba(0,0,0,0.15)]">
    <div className="w-[40px] h-full bg-[#666] flex items-center justify-center">
      <FaPlus className="w-[15px] h-[15px] text-white" />
    </div>
    <div className="ml-[5px] mt-[5px] flex gap-[4px]">
      <DockTab w="w-[147px]">Dispatch Listing</DockTab>
      <DockTab w="w-[180px]">Stock Search Results</DockTab>
      <DockTab w="w-[138px]">Enhancements</DockTab>
    </div>
    <div className="ml-auto w-[39px] h-full bg-[#c70007] flex items-center justify-center">
      <svg width="16" height="14" viewBox="0 0 16 14" aria-hidden="true"><path d="M0 0h3v3H0zM0 5.500h3v3H0zM0 11h3v3H0zM5 0h11v3H5zM5 5.500h11v3H5zM5 11h11v3H5z" fill="#fff" /></svg>
    </div>
  </div>
);

export default function App() {
  return (
    <div className="h-[1011px] flex flex-col overflow-hidden bg-white font-['Liberation_Sans',sans-serif]">
      <BrowserChrome />
      <AppHeader />
      <div className="flex-1 min-h-0">
        <div className="mt-[15px] h-[25px] flex justify-end pr-[16px]">
          <div className="w-[199px] border border-[#bbb] rounded-[3px] flex items-center justify-between pl-[8px] pr-[8px] pb-[1px] text-[13px] text-[#777]">
            Choose a Branch
            <span className="w-0 h-0 border-x-[3px] border-x-transparent border-t-[5px] border-t-[#666]" />
          </div>
        </div>
        <div className="flex pl-[17px] gap-[34px]">
          <div className="w-[1151px] shrink-0 pt-[8px]">
            <h1 className="h-[26px] text-[20px] leading-[24px] text-[#444]">Dispatch Mapping Screen: Albany (631)</h1>
            <MapTools />
            <MapPanel />
          </div>
          <StocksPanel />
        </div>
      </div>
      <BottomBar />
    </div>
  );
}
